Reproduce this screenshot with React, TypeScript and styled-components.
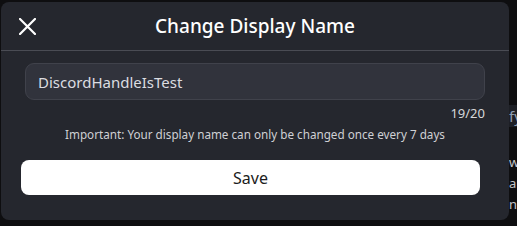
import { createGlobalStyle, styled } from 'styled-components';

const GlobalStyle = createGlobalStyle`
  html, body {
    margin: 0;
    padding: 0;
    background: #0e0e10;
  }
  * {
    box-sizing: border-box;
  }
`;

const Page = styled.div`
  position: relative;
  width: 517px;
  height: 226px;
  overflow: hidden;
  background: #0e0e10;
  font-family: "Noto Sans", "Open Sans", sans-serif;
  display: flex;
  justify-content: flex-end;
`;

const Feed = styled.div`
  width: 8px;
  padding-top: 105px;
  display: flex;
  flex-direction: column;
  white-space: nowrap;
`;

const FeedBand = styled.div`
  height: 22px;
  margin-bottom: 25px;
  background: #1d1f25;
  color: #8e9cb0;
  font-size: 15px;
  line-height: 22px;
`;

const FeedLine = styled.div`
  height: 21px;
  color: #c4c5c9;
  font-size: 13px;
  line-height: 21px;
`;

const Modal = styled.div`
  position: absolute;
  top: 2px;
  left: 1px;
  width: 508px;
  height: 218px;
  background: #25272e;
  border-radius: 8px;
  display: flex;
  flex-direction: column;
`;

const Header = styled.div`
  height: 49px;
  border-bottom: 1px solid #4a4c54;
  display: grid;
  grid-template-columns: 52px 1fr 52px;
  align-items: center;
`;

const CloseButton = styled.button`
  background: none;
  border: none;
  padding: 0;
  width: 52px;
  height: 48px;
  display: flex;
  align-items: center;
  justify-content: center;
  color: #ffffff;
  cursor: pointer;
`;

const Title = styled.h2`
  margin: 0;
  text-align: center;
  color: #ffffff;
  font-size: 19px;
  font-weight: 500;
  line-height: 48px;
`;

const Body = styled.div`
  display: flex;
  flex-direction: column;
  padding: 12px 24px 0 24px;
`;

const NameInput = styled.input`
  height: 37px;
  width: 100%;
  background: #31333c;
  border: 1px solid #40424b;
  border-radius: 9px;
  padding: 0 12px;
  color: #dcdde1;
  font-family: inherit;
  font-size: 15px;
  outline: none;
`;

const Counter = styled.div`
  text-align: right;
  color: #d6d7da;
  font-size: 13px;
  line-height: 16px;
  margin-top: 5px;
`;

const Note = styled.p`
  margin: 5px 0 0;
  text-align: center;
  color: #cfd0d4;
  font-size: 11.7px;
  line-height: 16px;
`;

const SaveButton = styled.button`
  margin: 18px 29px 0 20px;
  height: 35px;
  background: #ffffff;
  border: none;
  border-radius: 8px;
  color: #1b1c20;
  font-family: inherit;
  font-size: 16px;
  cursor: pointer;
`;

export default function App() {
  return (
    <>
      <GlobalStyle />
      <Page>
        <Feed>
          <FeedBand>fy</FeedBand>
          <FeedLine>wi</FeedLine>
          <FeedLine>an</FeedLine>
          <FeedLine>ng</FeedLine>
        </Feed>
        <Modal>
          <Header>
            <CloseButton aria-label="Close">
              <svg width="17" height="17" viewBox="0 0 17 17">
                <path d="M1 1 L16 16 M16 1 L1 16" stroke="currentColor" strokeWidth="2.2" strokeLinecap="square" />
              </svg>
            </CloseButton>
            <Title>Change Display Name</Title>
            <span />
          </Header>
          <Body>
            <NameInput defaultValue="DiscordHandleIsTest" maxLength={20} />
            <Counter>19/20</Counter>
            <Note>Important: Your display name can only be changed once every 7 days</Note>
          </Body>
          <SaveButton>Save</SaveButton>
        </Modal>
      </Page>
    </>
  );
}
